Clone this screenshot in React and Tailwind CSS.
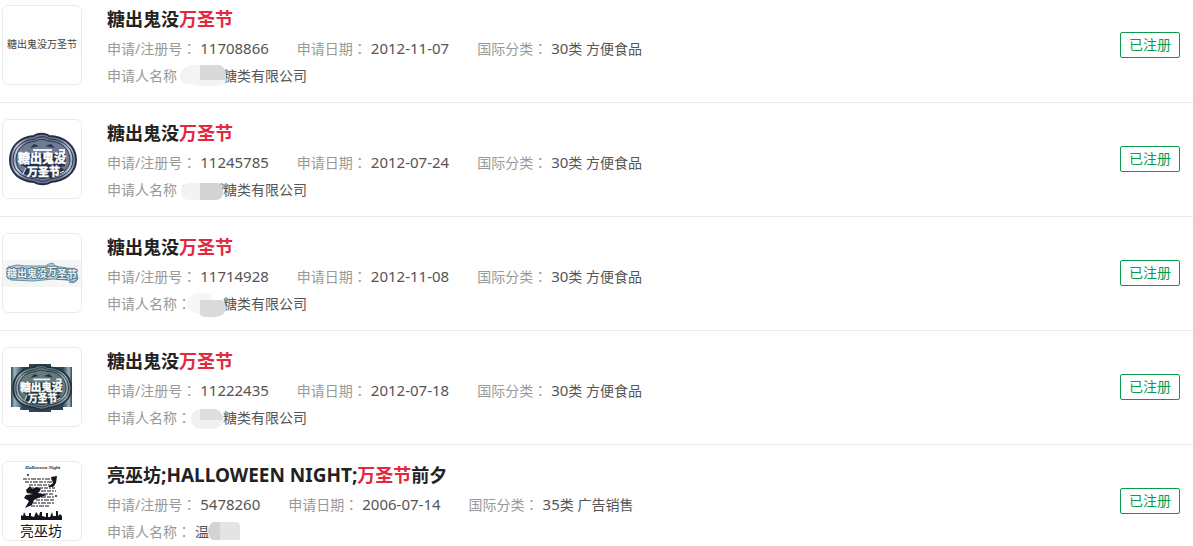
// Mark 1: plain lettering
function PlainMark() {
  return (
    <svg viewBox="0 0 78 78" className="h-full w-full">
      <rect y="28" width="78" height="23" fill="#fdfdfd" />
      <text x="4" y="42" fontSize="10" fill="#444">
        糖出鬼没万圣节
      </text>
    </svg>
  );
}

// The face shared by the two pumpkin marks
function PumpkinFace({ id, dark, mid, light }) {
  return (
    <g>
      <defs>
        <linearGradient id={id}>
          <stop offset="0" stopColor={mid} />
          <stop offset="0.1" stopColor={light} />
          <stop offset="0.25" stopColor={mid} />
          <stop offset="0.75" stopColor={mid} />
          <stop offset="0.9" stopColor={light} />
          <stop offset="1" stopColor={mid} />
        </linearGradient>
      </defs>
      <path
        d="M31 16C34 13 43 13 46 16C61 16 73 26 73 40C73 54 60 61 48 62C44 65 35 65 31 62C18 61 7 54 7 40C7 26 17 17 31 16Z"
        fill={`url(#${id})`}
        stroke={dark}
        strokeWidth="2"
      />
      <path
        d="M32 19C35 16 43 16 46 19C60 19 70 28 70 40C70 52 59 58 47 59C43 62 36 62 32 59C20 58 10 52 10 40C10 28 19 20 32 19Z"
        fill="none"
        stroke={dark}
        strokeWidth="1"
      />
      <path
        d="M33 21C36 19 42 19 45 21C58 21 67 29 67 40C67 50 57 56 46 57C43 59 36 59 33 57C22 56 13 50 13 40C13 29 21 22 33 21Z"
        fill={mid}
        stroke={dark}
        strokeWidth="1"
      />
      <path d="M27 28L31 24L36 26ZM42 26L48 24L52 28Z" fill={dark} />
      <path d="M30 30H49M56 30H61V36" fill="none" stroke="#eef1f4" strokeWidth="2" />
      <path
        d="M16 33L63 34L62 46L57 47L62 50L54 56L48 58H30L20 53L23 47L17 45Z"
        fill={dark}
      />
      <g
        fontSize="12"
        fontWeight="700"
        fontFamily="Liberation Sans, Noto Sans CJK SC, sans-serif"
        fill="#fff"
        stroke="#fff"
        strokeWidth="0.5"
      >
        <text x="15" y="43">
          糖出鬼没
        </text>
        <text x="24" y="56" fontSize="11">
          万圣节
        </text>
      </g>
      <path d="M20 54L23 48M57 53L61 51" stroke="#fff" strokeWidth="1" />
    </g>
  );
}

function PumpkinMark() {
  return (
    <svg viewBox="0 0 78 78" className="h-full w-full">
      <PumpkinFace id="pumpkin" dark="#27304a" mid="#6e7b92" light="#c3cbd8" />
    </svg>
  );
}

// Mark 3: outlined lettering on a pale band
function BannerMark() {
  return (
    <svg viewBox="0 0 78 78" className="h-full w-full">
      <rect y="26" width="78" height="27" fill="#f4f5f5" />
      <path
        d="M5 33L14 31L22 32L42 32L46 30L50 29L52 32L58 33L70 35L74 40L75 45L70 48L64 46L50 45L30 47L8 46L4 40Z"
        fill="#b9ccd5"
        stroke="#6d91a2"
        strokeWidth="1"
        strokeLinejoin="round"
      />
      <g
        fontSize="10"
        fontWeight="700"
        fill="#e8f0f3"
        stroke="#557c8f"
        strokeWidth="2"
        strokeLinejoin="round"
        paintOrder="stroke"
      >
        <text x="4" y="43">
          糖出鬼没
        </text>
        <text x="44" y="41">
          万
        </text>
        <text x="54" y="44">
          圣节
        </text>
      </g>
      <path d="M66 48C71 50 76 47 73 43" fill="none" stroke="#557c8f" strokeWidth="1" />
    </svg>
  );
}

// Mark 4: the pumpkin on a stepped plate
function FramedPumpkinMark() {
  return (
    <svg viewBox="0 0 78 78" className="h-full w-full">
      <defs>
        <linearGradient id="plate">
          <stop offset="0" stopColor="#2b4656" />
          <stop offset="0.06" stopColor="#9db3be" />
          <stop offset="0.2" stopColor="#2b4656" />
          <stop offset="0.85" stopColor="#2b4656" />
          <stop offset="0.95" stopColor="#9db3be" />
          <stop offset="1" stopColor="#2b4656" />
        </linearGradient>
      </defs>
      <path
        d="M8 19H26V16H48V19H69V59H60V62H48V64H26V62H17V59H8Z"
        fill="url(#plate)"
      />
      <g transform="translate(4 5) scale(0.88)">
        <PumpkinFace id="framed" dark="#22333e" mid="#66797f" light="#a9b9c0" />
      </g>
    </svg>
  );
}

// Mark 5: witch poster with its name below
function PosterMark() {
  return (
    <svg viewBox="0 0 78 78" className="h-full w-full">
      <text
        x="22"
        y="7"
        fontSize="5"
        fontStyle="italic"
        fontWeight="700"
        fontFamily="Liberation Serif, serif"
        fill="#15151f"
      >
        Halloween Night
      </text>
      <path
        d="M20 17H50M22 20H53M26 23H52M27 26H52M30 29H53M32 32H51M30 35H52M33 38H51M30 41H52M28 44H47"
        stroke="#15151f"
        strokeWidth="1"
        strokeDasharray="4 1 2 1 5 1"
      />
      <path
        d="M48 15L54 14L53 21L50 25L45 25L50 21ZM23 28L27 24L29 27L34 25L38 27L35 31L44 33L35 36L31 38L29 43L22 46L26 39L21 36L23 33L30 32L24 31Z"
        fill="#15151f"
      />
      <circle cx="25" cy="13" r="1" fill="#15151f" />
      <circle cx="53" cy="34" r="1" fill="#15151f" />
      <path
        d="M18 58V53L20 54L21 50L23 54H26V51H28V54L31 55L33 50L36 54L37 50H39V54L43 55V51H45V55H47L49 50L50 54H53V49H55V54L57 52L59 54V58Z"
        fill="#15151f"
      />
      <text x="17" y="74" fontSize="14" fill="#15151f">
        亮巫坊
      </text>
    </svg>
  );
}

// Each mask hides part of the applicant's name
const masks = {
  a: (
    <>
      <path d="M24 3H16C9 4 4 8 4 14C4 20 9 24 16 22L24 24Z" fill="#f5f4f3" />
      <path d="M24 18H50C49 22 46 24 42 24H24Z" fill="#f4f4f4" />
      <path d="M24 3H43C47 4 50 8 50 13V18H24Z" fill="#d9d9d9" />
    </>
  ),
  b: (
    <>
      <path d="M24 7H14C8 7 5 11 5 16C5 21 8 24 14 24H24Z" fill="#f3f3f2" />
      <path d="M24 7H42C45 8 47 11 47 15C47 20 45 24 40 24H24Z" fill="#d3d3d3" />
      <path d="M44 8H47V13" fill="none" stroke="#777" />
    </>
  ),
  c: (
    <>
      <path d="M24 3C16 3 10 8 11 15C12 20 18 23 24 24V10H36V6C33 3 28 3 24 3Z" fill="#f6f6f5" />
      <path d="M24 10H45C49 11 50 15 50 19C49 24 45 27 38 27H28L24 25Z" fill="#dadada" />
    </>
  ),
  d: (
    <>
      <rect x="15" y="5" width="32" height="20" rx="10" fill="#f0f0f0" />
      <path d="M24 5H38C44 6 47 10 47 16H24Z" fill="#dedede" />
    </>
  ),
  e: (
    <>
      <path d="M44 4H37C34 6 32 9 32 13C32 17 34 21 37 22H44Z" fill="#d3d3d3" />
      <path d="M44 4H60C63 4 64 6 64 9V22H44Z" fill="#e4e4e4" />
    </>
  ),
};

const trademarks = [
  {
    id: "11708866",
    title: { name: "糖出鬼没", match: "万圣节" },
    date: "2012-11-07",
    category: ["30", "类 方便食品"],
    applicant: "糖类有限公司",
    hidden: true,
    mask: "a",
    Mark: PlainMark,
  },
  {
    id: "11245785",
    title: { name: "糖出鬼没", match: "万圣节" },
    date: "2012-07-24",
    category: ["30", "类 方便食品"],
    applicant: "糖类有限公司",
    hidden: true,
    mask: "b",
    Mark: PumpkinMark,
  },
  {
    id: "11714928",
    title: { name: "糖出鬼没", match: "万圣节" },
    date: "2012-11-08",
    category: ["30", "类 方便食品"],
    applicant: "糖类有限公司",
    hidden: true,
    mask: "c",
    Mark: BannerMark,
  },
  {
    id: "11222435",
    title: { name: "糖出鬼没", match: "万圣节" },
    date: "2012-07-18",
    category: ["30", "类 方便食品"],
    applicant: "糖类有限公司",
    hidden: true,
    mask: "d",
    Mark: FramedPumpkinMark,
  },
  {
    id: "5478260",
    title: {
      name: "亮巫坊",
      latin: ";HALLOWEEN NIGHT;",
      match: "万圣节",
      rest: "前夕",
    },
    date: "2006-07-14",
    category: ["35", "类 广告销售"],
    applicant: "温",
    mask: "e",
    Mark: PosterMark,
  },
];

function Label({ children }) {
  return (
    <dt className="mr-1 text-[#999]">
      {children}
      {/* the TC face centres the colon in its cell */}
      <span className="font-['Noto_Sans_CJK_TC',sans-serif] leading-none">
        ：
      </span>
    </dt>
  );
}

function Digits({ children }) {
  return <span className="text-[15px] leading-none">{children}</span>;
}

function TrademarkRow({ item }) {
  const { Mark, title } = item;

  return (
    <li className="flex items-start border-b border-[#ebebeb] pt-4 pr-[13px] pb-[15px] pl-[2px] first:pt-[5px] last:border-b-0 last:pb-0">
      <div className="h-20 w-20 shrink-0 overflow-hidden rounded-md border border-[#ebebeb]">
        <Mark />
      </div>
      <div className="ml-[25px] min-w-0 flex-1 text-sm">
        <h3 className="text-lg leading-7 font-bold text-[#222]">
          {title.name}
          {title.latin && (
            <span className="text-[19px] leading-none">{title.latin}</span>
          )}
          <em className="text-[#e4293d] not-italic">{title.match}</em>
          {title.rest}
        </h3>
        <dl className="flex gap-7 leading-8 text-[#555]">
          <div className="flex items-baseline">
            <Label>申请/注册号</Label>
            <dd>
              <Digits>{item.id}</Digits>
            </dd>
          </div>
          <div className="flex items-baseline">
            <Label>申请日期</Label>
            <dd>
              <Digits>{item.date}</Digits>
            </dd>
          </div>
          <div className="flex items-baseline">
            <Label>国际分类</Label>
            <dd>
              <Digits>{item.category[0]}</Digits>
              {item.category[1]}
            </dd>
          </div>
        </dl>
        <dl className="flex items-baseline leading-[22px] text-[#555]">
          <Label>申请人名称</Label>
          <dd className="relative">
            {item.hidden && <span className="inline-block w-7" />}
            {item.applicant}
            <svg
              viewBox="0 0 68 28"
              className="absolute -top-[3px] -left-[19px] h-7 w-[68px]"
              aria-hidden="true"
            >
              {masks[item.mask]}
            </svg>
          </dd>
        </dl>
      </div>
      <div className="flex h-20 shrink-0 items-center">
        <span className="flex h-[26px] w-[60px] items-center justify-center rounded-xs border border-[#0a9b4c] text-sm text-[#0a9b4c]">
          已注册
        </span>
      </div>
    </li>
  );
}

function App() {
  return (
    <ul className="bg-white font-['Noto_Sans','Noto_Sans_CJK_SC',sans-serif]">
      {trademarks.map((item) => (
        <TrademarkRow key={item.id} item={item} />
      ))}
    </ul>
  );
}

export default App;
